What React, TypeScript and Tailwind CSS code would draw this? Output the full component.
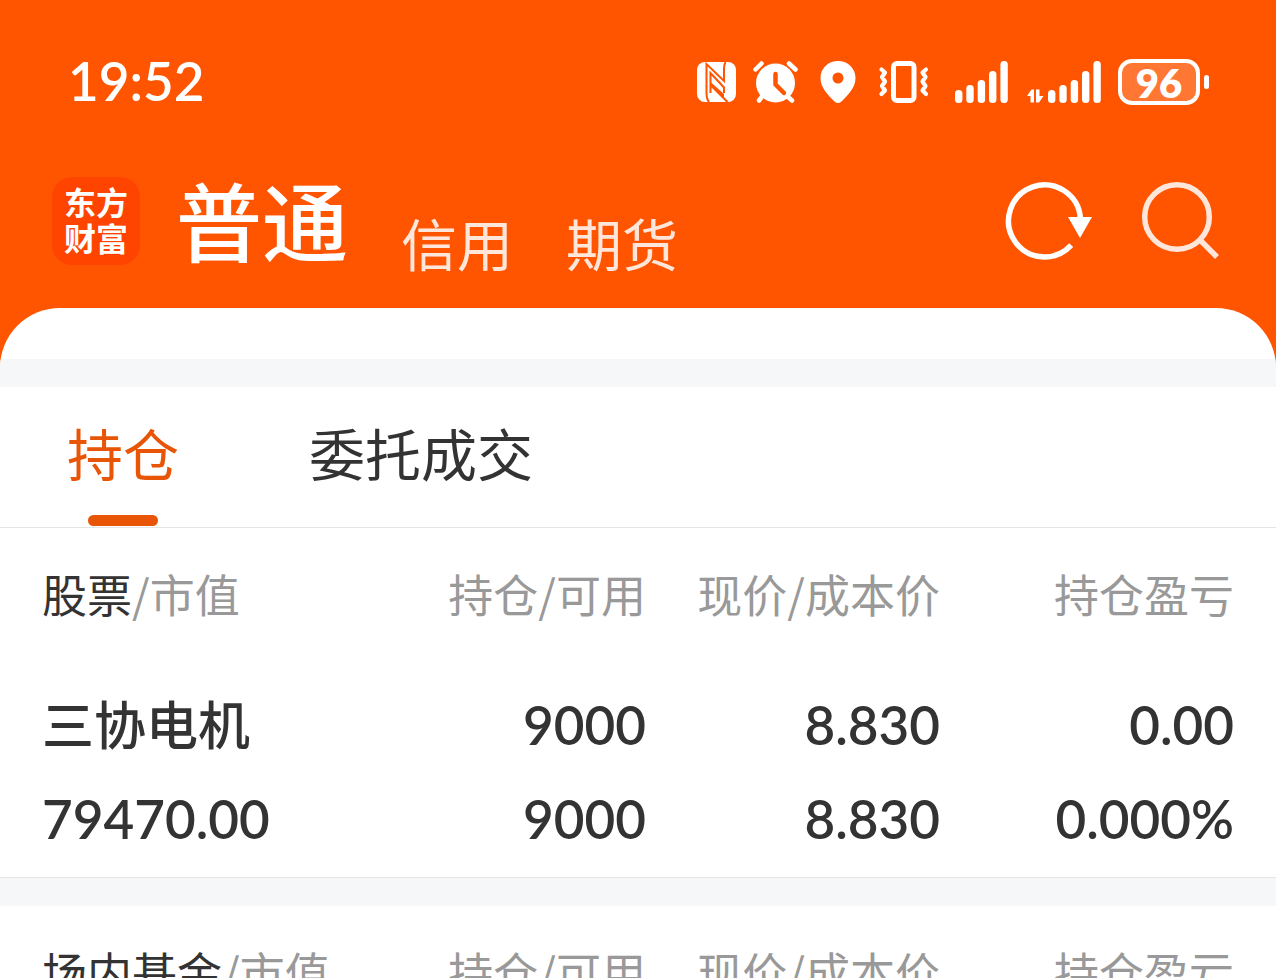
import { useState } from "react";

const ACCOUNTS = ["普通", "信用", "期货"];
const TABS = ["持仓", "委托成交"];
const COLUMNS = ["持仓/可用", "现价/成本价", "持仓盈亏"];

interface Holding {
  name: string;
  marketValue: string;
  amount: string;
  available: string;
  price: string;
  cost: string;
  profit: string;
  profitRate: string;
}

const STOCKS: Holding[] = [
  {
    name: "三协电机",
    marketValue: "79470.00",
    amount: "9000",
    available: "9000",
    price: "8.830",
    cost: "8.830",
    profit: "0.00",
    profitRate: "0.000%",
  },
];

function NfcIcon() {
  return (
    <svg width="39" height="42" viewBox="0 0 39 42" aria-hidden="true">
      <rect x="0" y="1" width="39" height="40" rx="8" fill="#fff" />
      <path
        d="M12 41 Q9.500 38 9.500 32 V3 L27 20 V8 Q27 4 28.500 1 M13.500 32 V12 L27 26.500 V32 M13.500 24 L30.500 41"
        fill="none"
        stroke="#ff5500"
        strokeWidth="2"
      />
      <path d="M13.500 21 L27 33 V37 L13.500 25 Z" fill="#ff5500" />
    </svg>
  );
}

function AlarmIcon() {
  return (
    <svg width="45" height="42" viewBox="0 0 45 42" fill="none" stroke="#fff" strokeLinecap="round" aria-hidden="true">
      <path d="M2.500 8.500 L8.500 2.500 M36 2.500 L42.500 8.500" strokeWidth="4.500" />
      <path d="M9.500 35 L6 39.500 M34 35 L39 39.500" strokeWidth="4.500" />
      <circle cx="22.500" cy="22" r="19.500" fill="#fff" stroke="none" />
      <path d="M22.500 13 V23.500 L31 32" stroke="#ff5500" strokeWidth="4.500" strokeLinejoin="round" />
    </svg>
  );
}

function PinIcon() {
  return (
    <svg width="46" height="42" viewBox="0 0 46 42" aria-hidden="true">
      <path
        fill="#fff"
        fillRule="evenodd"
        d="M23 0 C13 0 5.500 7.500 5.500 17 C5.500 27 13 34 19.500 40.500 Q23 43.500 26.500 40.500 C33 34 40.500 27 40.500 17 C40.500 7.500 33 0 23 0 Z M23 11.500 A5.500 5.500 0 1 1 23 22.500 A5.500 5.500 0 1 1 23 11.500 Z"
      />
    </svg>
  );
}

function VibrateIcon() {
  return (
    <svg
      width="52"
      height="42"
      viewBox="0 0 52 42"
      fill="none"
      stroke="#fff"
      strokeLinecap="round"
      strokeLinejoin="round"
      aria-hidden="true"
    >
      <rect x="15.500" y="2.500" width="20.500" height="37" rx="3.500" strokeWidth="5" />
      <path
        d="M3.500 8.500 L7 11.500 L4 16 L7 20.500 L4 25 L7 29.500 L3.500 33 M48 8.500 L44.500 11.500 L47.500 16 L44.500 20.500 L47.500 25 L44.500 29.500 L48 33"
        strokeWidth="4.200"
      />
    </svg>
  );
}

const BARS = [
  { x: 0, y: 29 },
  { x: 11.3, y: 24 },
  { x: 22.7, y: 19 },
  { x: 34, y: 10 },
  { x: 45.4, y: 0 },
];

function SignalIcon({ data = false }: { data?: boolean }) {
  const width = data ? 74 : 63;
  const start = data ? 21 : 8;
  return (
    <svg width={width} height="42" viewBox={`0 0 ${width} 42`} fill="#fff" aria-hidden="true">
      {data && <path d="M4.500 28.500 H7 V41.500 H3.500 V35 H0 Z M9 28.500 H12.500 V35 H16.500 L12 41.500 H9 Z" />}
      {BARS.map((bar) => (
        <rect key={bar.x} x={start + bar.x} y={bar.y} width="7.400" height={42 - bar.y} rx="3.500" />
      ))}
    </svg>
  );
}

function Battery({ level }: { level: number }) {
  return (
    <div className="flex items-center gap-1">
      <div className="flex h-[46px] w-[82px] items-center justify-center rounded-[14px] border-4 border-white bg-[#ff7733] pt-0.5 text-[40px] leading-none font-extrabold">
        {level}
      </div>
      <div className="h-3.5 w-[5px] rounded-full bg-white" />
    </div>
  );
}

function StatusBar() {
  return (
    <div className="flex h-[52px] items-center justify-between pr-[67px] pl-[68px] font-[Lato,'Noto_Sans_CJK_SC',sans-serif] text-white">
      <time className="pb-1 text-[53px] leading-none font-semibold">19:52</time>
      <div className="flex items-center gap-[17px]">
        <NfcIcon />
        <AlarmIcon />
        <PinIcon />
        <VibrateIcon />
        <SignalIcon />
        <SignalIcon data />
        <Battery level={96} />
      </div>
    </div>
  );
}

function AppLogo() {
  return (
    <div className="flex size-[88px] justify-center rounded-[20px] bg-[#ff4400] pt-1.5">
      <span className="w-16 text-[32px] leading-9 font-bold break-all text-white">东方财富</span>
    </div>
  );
}

function RefreshIcon() {
  return (
    <svg width="90" height="82" viewBox="0 0 90 82" aria-hidden="true">
      <path d="M67.200 65.100 A36 36 0 1 1 76.400 38" fill="none" stroke="#fff" strokeWidth="5.500" />
      <path d="M64 37 H88 L76 58 Z" fill="#fff" />
    </svg>
  );
}

function SearchIcon() {
  return (
    <svg width="80" height="82" viewBox="0 0 80 82" fill="none" stroke="#ffe6db" strokeWidth="5.500" aria-hidden="true">
      <circle cx="37" cy="37" r="32.300" />
      <path d="M60 60 L77 77" />
    </svg>
  );
}

function HoldingsTable({ title, rows }: { title: string; rows: Holding[] }) {
  return (
    <div className="px-[42px]">
      <table className="w-full table-fixed text-right text-[#333333]">
        <thead>
          <tr className="h-[138px] text-[45px] leading-none whitespace-nowrap text-[#999999]">
            <th className="w-[26%] pb-2 text-left font-normal">
              <span className="text-[#333333]">{title}</span>/市值
            </th>
            {COLUMNS.map((column) => (
              <th key={column} className="pb-2 font-normal">
                {column}
              </th>
            ))}
          </tr>
        </thead>
        <tbody className="font-[Lato,'Noto_Sans_CJK_SC',sans-serif] text-[53px] leading-[94px] font-semibold">
          {rows.map((row) => (
            <tr key={row.name} className="align-top">
              <td className="pt-3 pb-[11px] text-left">
                <p className="h-[94px] font-['Noto_Sans_CJK_SC',sans-serif] text-[52px] leading-[90px] font-medium">
                  {row.name}
                </p>
                <p className="h-[94px]">{row.marketValue}</p>
              </td>
              <td className="pt-3">
                <p>{row.amount}</p>
                <p>{row.available}</p>
              </td>
              <td className="pt-3">
                <p>{row.price}</p>
                <p>{row.cost}</p>
              </td>
              <td className="pt-3">
                <p>{row.profit}</p>
                <p>{row.profitRate}</p>
              </td>
            </tr>
          ))}
        </tbody>
      </table>
    </div>
  );
}

export default function App() {
  const [account, setAccount] = useState("普通");
  const [tab, setTab] = useState("持仓");

  return (
    <div className="h-screen overflow-hidden bg-[#ff5500] font-['Noto_Sans_CJK_SC',sans-serif]">
      <header className="pt-14">
        <StatusBar />

        <div className="flex items-start justify-between pt-[69px] pr-14 pb-[35px] pl-[52px]">
          <div className="flex items-start gap-9">
            <AppLogo />
            <nav className="flex h-24 items-end gap-[53px]">
              {ACCOUNTS.map((item) => (
                <button
                  key={item}
                  onClick={() => setAccount(item)}
                  className={
                    account === item
                      ? "pb-2.5 text-[86px] leading-[88px] font-medium text-white"
                      : "pb-1.5 text-[56px] leading-[50px] text-[#ffe6db]"
                  }
                >
                  {item}
                </button>
              ))}
            </nav>
          </div>

          <div className="flex gap-[46px]">
            <button aria-label="刷新" className="pt-[3px]">
              <RefreshIcon />
            </button>
            <button aria-label="搜索" className="pt-[3px]">
              <SearchIcon />
            </button>
          </div>
        </div>
      </header>

      {/* 内容区 */}
      <main className="min-h-full overflow-hidden rounded-t-[60px] bg-white">
        <div className="h-[51px]" />
        <div className="h-7 bg-[#f6f7f9]" />

        <div className="flex h-[141px] gap-[130px] border-b border-[#e5e5e5] px-[67px]">
          {TABS.map((item) => (
            <button
              key={item}
              onClick={() => setTab(item)}
              className={`flex flex-col items-center justify-between pt-[30px] pb-px text-[56px] leading-[70px] ${
                tab === item ? "text-[#e85506]" : "text-[#333333]"
              }`}
            >
              {item}
              {tab === item && <span className="h-[11px] w-[70px] rounded-full bg-[#e85506]" />}
            </button>
          ))}
        </div>

        <HoldingsTable title="股票" rows={STOCKS} />
        <div className="h-[29px] border-t border-[#e5e5e5] bg-[#f6f7f9]" />
        <HoldingsTable title="场内基金" rows={[]} />
      </main>
    </div>
  );
}
